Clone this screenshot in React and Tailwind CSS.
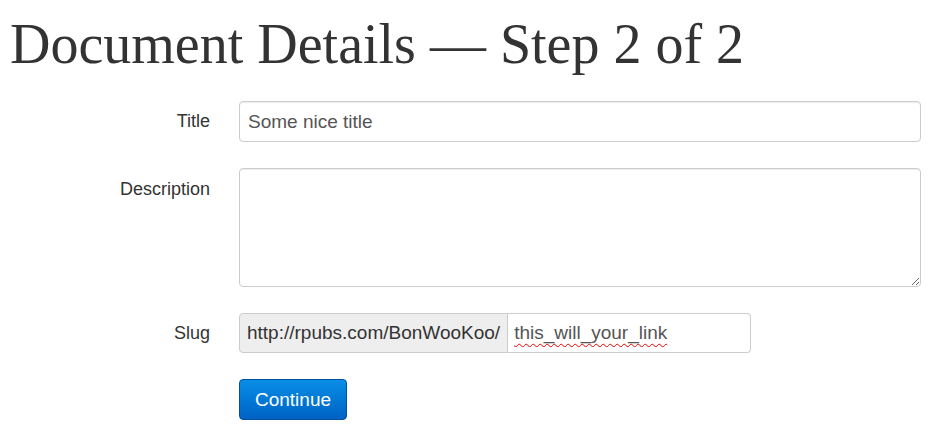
import React from "react";

function Row({ label, children, top }) {
  return (
    <div className="flex">
      <label
        className={`w-[239px] shrink-0 text-right pr-[29px] text-[18px] text-[#333] ${
          top ? "pt-[8px]" : "self-center"
        }`}
      >
        {label}
      </label>
      <div className="flex-1">{children}</div>
    </div>
  );
}

export default function App() {
  return (
    <div
      className="w-[937px] h-[440px] bg-white overflow-hidden text-[#333]"
      style={{ fontFamily: '"Liberation Sans", Arial, sans-serif' }}
    >
      <h1
        className="pl-[10px] pt-[9px] text-[56px] leading-[70px] font-normal text-[#333]"
        style={{ fontFamily: '"Liberation Serif", serif' }}
      >
        Document Details — Step 2 of 2
      </h1>

      <div className="pr-[16px] mt-[22px] flex flex-col">
        <Row label="Title">
          <input
            defaultValue="Some nice title"
            className="w-full h-[41px] px-[8px] border border-[#ccc] rounded-[4px] text-[19px] text-[#555] outline-none shadow-[inset_0_1px_1px_rgba(0,0,0,0.075)]"
          />
        </Row>

        <div className="h-[26px]" />
        <Row label="Description" top>
          <textarea className="block w-full h-[119px] px-[8px] py-[6px] border border-[#ccc] rounded-[4px] text-[19px] text-[#555] outline-none shadow-[inset_0_1px_1px_rgba(0,0,0,0.075)]" />
        </Row>

        <div className="h-[26px]" />
        <Row label="Slug">
          <div className="flex w-[512px] h-[40px]">
            <span className="flex items-center px-[7px] bg-[#eee] border border-[#ccc] rounded-l-[4px] text-[19px] text-[#333] whitespace-nowrap">
              http://rpubs.com/BonWooKoo/
            </span>
            <input
              defaultValue="this_will_your_link"
              className="flex-1 min-w-0 px-[6px] border border-l-0 border-[#ccc] rounded-r-[4px] text-[19px] text-[#555] outline-none underline decoration-wavy decoration-[#e00] decoration-1 underline-offset-[4px]"
            />
          </div>
        </Row>

        <div className="h-[26px]" />
        <Row label="">
          <button className="w-[108px] h-[41px] pt-[2px] rounded-[4px] border border-[#0050a0] bg-gradient-to-b from-[#0a8ee6] to-[#0062c4] text-white text-[19px]">
            Continue
          </button>
        </Row>
      </div>
    </div>
  );
}
